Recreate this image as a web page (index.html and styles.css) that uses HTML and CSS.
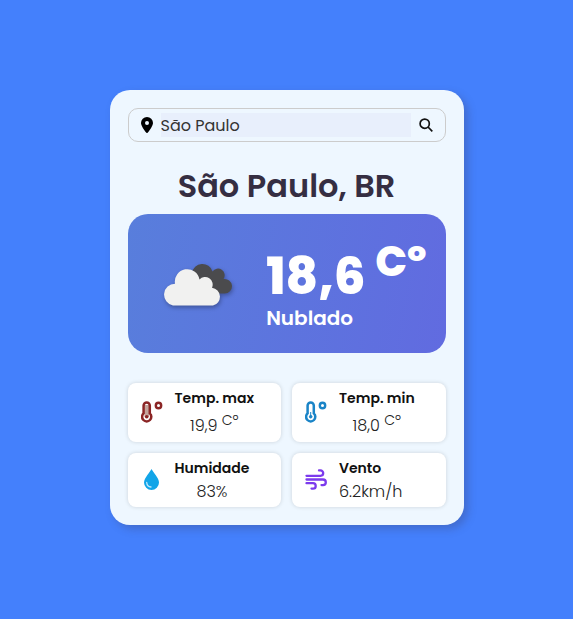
FILE: index.html
```html
<!DOCTYPE html>
<html lang="pt-BR">
<head>
<meta charset="utf-8">
<meta name="viewport" content="width=device-width, initial-scale=1">
<title>São Paulo, BR</title>
<link rel="stylesheet" href="styles.css">
</head>
<body>
<main class="card">
  <form class="search">
    <label class="search-label" for="city" aria-label="Cidade">
      <svg class="pin" viewBox="0 0 12 16"><path fill-rule="evenodd" d="M6 0a6 6 0 0 0-6 6c0 2.600 3.300 7.400 5.200 9.600a1 1 0 0 0 1.600 0C8.700 13.400 12 8.600 12 6a6 6 0 0 0-6-6zm0 4a2 2 0 1 1 0 4 2 2 0 0 1 0-4z"/></svg>
    </label>
    <input class="search-input" id="city" type="text" value="São Paulo">
    <button class="search-button" type="button" aria-label="Buscar">
      <svg class="lens" viewBox="0 0 14 14" fill="none" stroke="#111" stroke-width="1.700"><circle cx="5.700" cy="5.700" r="4.600"/><path d="M9 9l4.300 4.300"/></svg>
    </button>
  </form>
  <h1 class="city">São Paulo, BR</h1>
  <section class="weather">
    <svg class="cloud" viewBox="0 0 70 44">
      <path fill="#4b4b4d" d="M30 11a10.500 10.500 0 0 1 20.500-1.500A6.500 6.500 0 0 1 61.500 17a7.300 7.300 0 1 1 1 14.500H46z"/>
      <path fill="#f1f1f0" d="M11 43.500a11 11 0 0 1 2-21.800A12.400 12.400 0 1 1 37.500 17.500a7.600 7.600 0 0 1 12.500 8.300A9 9 0 0 1 51 43.500z"/>
    </svg>
    <div class="reading">
      <p class="temperature">18,6 <sup class="unit">Cº</sup></p>
      <p class="condition">Nublado</p>
    </div>
  </section>
  <section class="details">
    <article class="detail">
      <svg class="icon icon-max" viewBox="0 0 22 22"><path fill="#c4a49c" d="M3.500 4h4.500v12h-4.500z"/><path fill="none" stroke="currentColor" stroke-width="2.500" d="M2.600 4.600a3.100 3.100 0 0 1 6.200 0v7.800a4.600 4.600 0 1 1-6.200 0z"/><circle cx="5.700" cy="15.700" r="1.800" fill="currentColor"/><circle cx="17.500" cy="4.500" r="2.700" fill="none" stroke="currentColor" stroke-width="2.400"/></svg>
      <div><h2 class="name">Temp. max</h2><p class="value">19,9 <sup class="small-unit">Cº</sup></p></div>
    </article>
    <article class="detail">
      <svg class="icon icon-min" viewBox="0 0 22 22" fill="none" stroke="currentColor"><path stroke-width="2.500" d="M2.600 4.600a3.100 3.100 0 0 1 6.200 0v7.800a4.600 4.600 0 1 1-6.200 0z"/><path stroke-width="1" d="M5.700 11v5"/><circle cx="5.700" cy="15.700" r="1.300" fill="currentColor"/><circle cx="17.500" cy="4.500" r="2.700" stroke-width="2.400"/></svg>
      <div><h2 class="name">Temp. min</h2><p class="value">18,0 <sup class="small-unit">Cº</sup></p></div>
    </article>
    <article class="detail">
      <svg class="icon icon-humidity" viewBox="0 0 22 22"><path fill="currentColor" d="M10.500 0c1 2.500 7.500 9 7.500 13.500a7.500 7.500 0 0 1-15 0C3 9 9.500 2.500 10.500 0z"/><path fill="none" stroke="#bfe7fb" stroke-width="1.300" stroke-linecap="round" d="M5.700 13.500c.2 2.800 2 4.300 4.300 4.500"/></svg>
      <div><h2 class="name">Humidade</h2><p class="value">83%</p></div>
    </article>
    <article class="detail">
      <svg class="icon icon-wind" viewBox="0 0 22 22" fill="none" stroke="currentColor" stroke-width="2.300" stroke-linecap="round" stroke-linejoin="round"><path d="M1.500 6.800H15.500a2.700 2.700 0 0 0 0-5.400H14M1.500 10.500H18a2.800 2.800 0 0 1 0 5.600h-1.500M1.500 14.200H8a2.700 2.700 0 0 1 0 5.400H6.500"/></svg>
      <div><h2 class="name">Vento</h2><p class="value">6.2km/h</p></div>
    </article>
  </section>
</main>
</body>
</html>
```
FILE: styles.css
```css
* {
  box-sizing: border-box;
  margin: 0;
}

body {
  display: flex;
  align-items: center;
  justify-content: center;
  min-height: 100vh;
  padding-bottom: 4px;
  background: #4480fc;
  color: #111;
  font-family: Poppins, Inter, sans-serif;
}

.card {
  width: 100%;
  max-width: 354px;
  padding: 18px;
  border-radius: 20px;
  background: #eef7ff;
  box-shadow: 4px 4px 8px rgba(60, 60, 100, 0.3);
}

.search {
  display: flex;
  align-items: center;
  padding: 4px 12px;
  border: 1px solid #ccc;
  border-radius: 10px;
}

.search-label {
  display: flex;
}

.pin {
  width: 12px;
  height: 16px;
}

.search-input {
  flex: 1;
  min-width: 0;
  height: 24px;
  margin: 0 8px;
  padding: 0;
  border: 0;
  background: #e8effc;
  color: #333;
  font: inherit;
  font-size: 16px;
}

.search-button {
  display: flex;
  padding: 0;
  border: 0;
  background: none;
}

.lens {
  width: 14px;
  height: 14px;
}

.city {
  margin: 20px 0 4px;
  color: #352e42;
  font-size: 32px;
  font-weight: 600;
  line-height: 48px;
  text-align: center;
}

.weather {
  display: flex;
  align-items: center;
  justify-content: space-between;
  padding: 0 19px 0 34px;
  border-radius: 20px;
  background: linear-gradient(100deg, #587edc, #616be0);
  color: #fff;
}

.cloud {
  width: 70px;
  height: 44px;
  filter: drop-shadow(1px 2px 2px rgba(0, 0, 0, 0.3));
}

.reading {
  padding: 33px 0 24px;
}

.temperature {
  font-size: 50px;
  font-weight: 800;
  line-height: 60px;
  white-space: nowrap;
}

.unit {
  font-size: 42px;
  line-height: 0;
}

.condition {
  font-size: 20px;
  font-weight: 600;
  line-height: 22px;
}

.details {
  display: grid;
  grid-template-columns: 1fr 1fr;
  gap: 11px;
  margin-top: 30px;
}

.detail {
  display: flex;
  align-items: center;
  gap: 12px;
  padding: 4px 13px;
  border-radius: 8px;
  background: #fff;
  box-shadow: 0 0 4px rgba(0, 0, 0, 0.15);
}

.icon {
  width: 22px;
  height: 22px;
}

.icon-max {
  color: #8b2525;
}

.icon-min {
  color: #1a84c7;
}

.icon-humidity {
  color: #12a5e8;
}

.icon-wind {
  color: #7c3aed;
}

.name {
  font-size: 14px;
  font-weight: 600;
  line-height: 23px;
}

.value {
  color: #222;
  font-size: 16px;
  font-weight: 300;
  line-height: 23px;
  text-align: center;
}

.small-unit {
  font-size: 14px;
  line-height: 20px;
}
```
